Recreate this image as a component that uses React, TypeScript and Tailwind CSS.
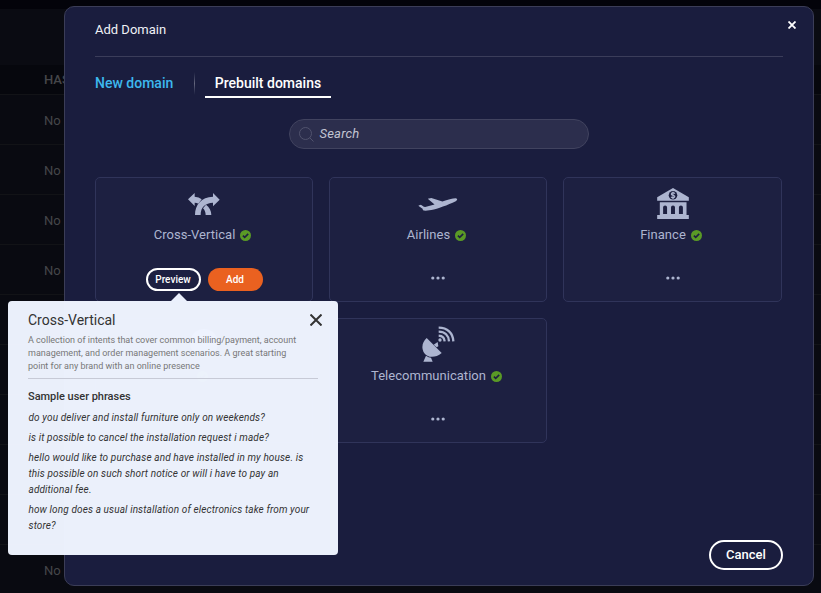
import type { ReactNode } from "react";

const CrossIcon = () => (
  <svg width="32" height="22" viewBox="0 0 96 66" fill="currentColor">
    <path d="M21 66C21 35 40 12 75 11V0L95 20L75 40V29C52 30 38 42 38 66Z" />
    <path d="M20 0L0 19L20 39V29Q27 29 31 32L41 19Q33 11 20 11Z" />
    <path d="M45 46L54 35C64 42 70 54 70 66H53C53 58 50 51 45 46Z" />
  </svg>
);

const PlaneIcon = () => (
  <svg width="40" height="14" viewBox="0 0 121 43" fill="currentColor">
    <path d="M1 26L8 24L17 30L21 31L50 23L29 5L40 3L74 14C90 8 105 4 115 4C121 5 121 9 115 13C90 25 60 36 40 40L22 42C15 42 12 40 14 37L1 28Z" />
  </svg>
);

const BankIcon = () => (
  <svg width="32" height="31" viewBox="0 0 96 94" fill="currentColor" className="-mt-px">
    <path d="M0 28L48 0L96 28V39H0Z" />
    <path d="M8 43H89V82H96V94H0V82H8Z" />
    <circle cx="48" cy="22" r="13" fill="#1d2041" />
    <path d="M54 17Q48 12 44 16Q41 21 48 22Q56 24 52 28Q48 31 42 27M48 11V33" fill="none" stroke="currentColor" strokeWidth="3.5" />
    <path d="M18 79V58Q18 53 24 53T30 58V79ZM42 79V58Q42 53 48 53T54 58V79ZM66 79V58Q66 53 72 53T78 58V79Z" fill="#1d2041" />
  </svg>
);

const DishIcon = () => (
  <svg width="33" height="36" viewBox="0 0 99 108" fill="currentColor" className="-mt-[2px]">
    <path d="M14 36L59 81C40 97 16 96 6 80C-3 65 1 48 14 36Z" />
    <path d="M4 107L12 89Q20 95 27 95L32 107Z" />
    <path d="M35 56L47 48L49 61L44 64Z" />
    <circle cx="54" cy="42" r="5" />
    <path d="M50 29Q67 30 68 46M50 17C69 17 80 29 81 46M50 5C76 5 93 21 94 46" fill="none" stroke="currentColor" strokeWidth="7" />
  </svg>
);

const ShieldIcon = () => (
  <svg width="28" height="32" viewBox="0 0 28 32" fill="currentColor">
    <circle cx="14" cy="14" r="14" />
  </svg>
);

const Check = () => (
  <svg width="11" height="11" viewBox="0 0 11 11" className="mt-px shrink-0">
    <circle cx="5.5" cy="5.5" r="5.5" fill="#5a9a26" />
    <path d="M2.9 5.7L4.7 7.4L8.2 3.9" fill="none" stroke="#1d2041" strokeWidth="1.6" />
  </svg>
);

const Dots = () => (
  <svg width="14" height="4" viewBox="0 0 14 4" fill="currentColor" className="mt-[31px]">
    <circle cx="1.8" cy="2" r="1.6" />
    <circle cx="7" cy="2" r="1.6" />
    <circle cx="12.2" cy="2" r="1.6" />
  </svg>
);

function Card({ icon, name, children }: { icon: ReactNode; name: string; children?: ReactNode }) {
  return (
    <div className="flex h-[125px] flex-col items-center rounded-[5px] border border-[#30345a] bg-[#1d2041] text-[#adb5d0]">
      <div className="mt-[7px] flex h-[38px] items-center justify-center">{icon}</div>
      <div className="mt-0.5 mr-[3px] flex h-5 items-center gap-[5px] text-[13px] leading-5 tracking-[0.03px]">
        {name}
        <Check />
      </div>
      {children ?? <Dots />}
    </div>
  );
}

const phrases = [
  "do you deliver and install furniture only on weekends?",
  "is it possible to cancel the installation request i made?",
  "hello would like to purchase and have installed in my house. is this possible on such short notice or will i have to pay an additional fee.",
  "how long does a usual installation of electronics take from your store?",
];

const tableRows = ["No", "No", "No", "No", "", "", "", "", "", "No"];

function Popover() {
  return (
    <div className="absolute top-[301px] left-2 h-[254px] w-[330px] rounded-[4px] bg-[#eff4ff]/98 px-5 pt-[9px] text-[#333]">
      <svg width="16" height="8" viewBox="0 0 16 8" className="absolute -top-2 left-[163px]">
        <path d="M0 8L8 0L16 8Z" fill="#ebf0fc" />
      </svg>
      <div className="flex h-5 items-center justify-between">
        <h3 className="text-[14px] leading-5">Cross-Vertical</h3>
        <svg width="12" height="12" viewBox="0 0 12 12" className="mr-[-4px]">
          <path d="M.5 .5L11.5 11.5M11.5 .5L.5 11.5" stroke="#333" strokeWidth="2" />
        </svg>
      </div>
      <p className="mt-1 w-[280px] text-[9px] leading-[13px] text-[#777]">
        A collection of intents that cover common billing/payment, account management, and order management scenarios. A great starting point for any brand with an online presence
      </p>
      <div className="mt-[5px] h-px bg-[#c7cad6]" />
      <h4 className="mt-[10px] text-[11px] leading-4 font-medium tracking-[-0.03px]">Sample user phrases</h4>
      <ul className="mt-[5px] flex w-[288px] flex-col gap-1 pl-[0.5px] text-[10px] leading-4 tracking-[0.125px] italic">
        {phrases.map((p) => (
          <li key={p}>{p}</li>
        ))}
      </ul>
    </div>
  );
}

export default function App() {
  return (
    <div className="relative h-[593px] w-[821px] overflow-hidden bg-[#090a11] font-[Roboto,sans-serif]">
      <div className="h-[9px] bg-[#03030a]" />
      <div className="h-[56px] bg-[#0a0b12]" />
      <div className="flex h-[30px] items-center border-b border-[#121317] bg-[#06070d] pl-11 text-[13px] font-medium text-[#45464a]">HAS</div>
      {tableRows.map((text, i) => (
        <div key={i} className="flex h-[50px] items-center border-b border-[#121317] pt-[2px] pl-11 text-[13px] text-[#45464a]">{text}</div>
      ))}

      <div className="absolute top-[6px] left-16 flex h-[580px] w-[750px] flex-col rounded-[10px] border border-[#3b3d57] bg-[#1a1d3e] px-[30px]">
        <div className="flex h-[50px] items-center justify-between border-b border-[#3b3d5a] pb-[3px] text-[13px] text-[#f0f1f6]">
          <h1>Add Domain</h1>
          <svg width="8" height="8" viewBox="0 0 8 8" className="mr-[-13px] mb-[11px]">
            <path d="M.5 .5L7.5 7.5M7.5 .5L.5 7.5" stroke="#fff" strokeWidth="1.8" />
          </svg>
        </div>
        <div className="mt-[15px] flex h-[26px] text-[14px] font-medium">
          <div className="w-[99px] leading-[23px] text-[#3db8ee]">New domain</div>
          <div className="h-[23px] w-px bg-linear-to-b from-[#1a1d3e] via-[#65677e] to-[#1a1d3e]" />
          <div className="ml-[10px] w-[126px] border-b-2 border-white text-center leading-[23px] text-white">Prebuilt domains</div>
        </div>
        <div className="mt-[21px] ml-[194px] flex h-[30px] w-[300px] items-center rounded-full border border-[#41435f] bg-[#2c2e4d] pl-[9px] text-[13px] tracking-[0.2px] text-[#c2c4d2] italic">
          <svg width="15" height="15" viewBox="0 0 15 15" fill="none" stroke="#51536e" className="mr-[5.5px]">
            <circle cx="6.5" cy="6.5" r="6" />
            <path d="M10.8 10.8L14.5 14.5" />
          </svg>
          Search
        </div>
        <div className="mt-7 grid grid-cols-[218px_218px_219px] gap-4">
          <Card icon={<CrossIcon />} name="Cross-Vertical">
            <div className="mt-[23px] flex gap-[7px] text-[10px] font-medium text-white">
              <button className="h-[23px] w-[55px] rounded-full border-2 border-white">Preview</button>
              <button className="h-[23px] w-[55px] rounded-full bg-[#ea6120]">Add</button>
            </div>
          </Card>
          <Card icon={<PlaneIcon />} name="Airlines" />
          <Card icon={<BankIcon />} name="Finance" />
          <Card icon={<ShieldIcon />} name="" />
          <Card icon={<DishIcon />} name="Telecommunication" />
        </div>
        <button className="mt-auto mb-[15px] ml-auto h-[30px] w-[74px] rounded-full border-2 border-white text-[13px] font-medium text-white">Cancel</button>
      </div>
      <Popover />
    </div>
  );
}
